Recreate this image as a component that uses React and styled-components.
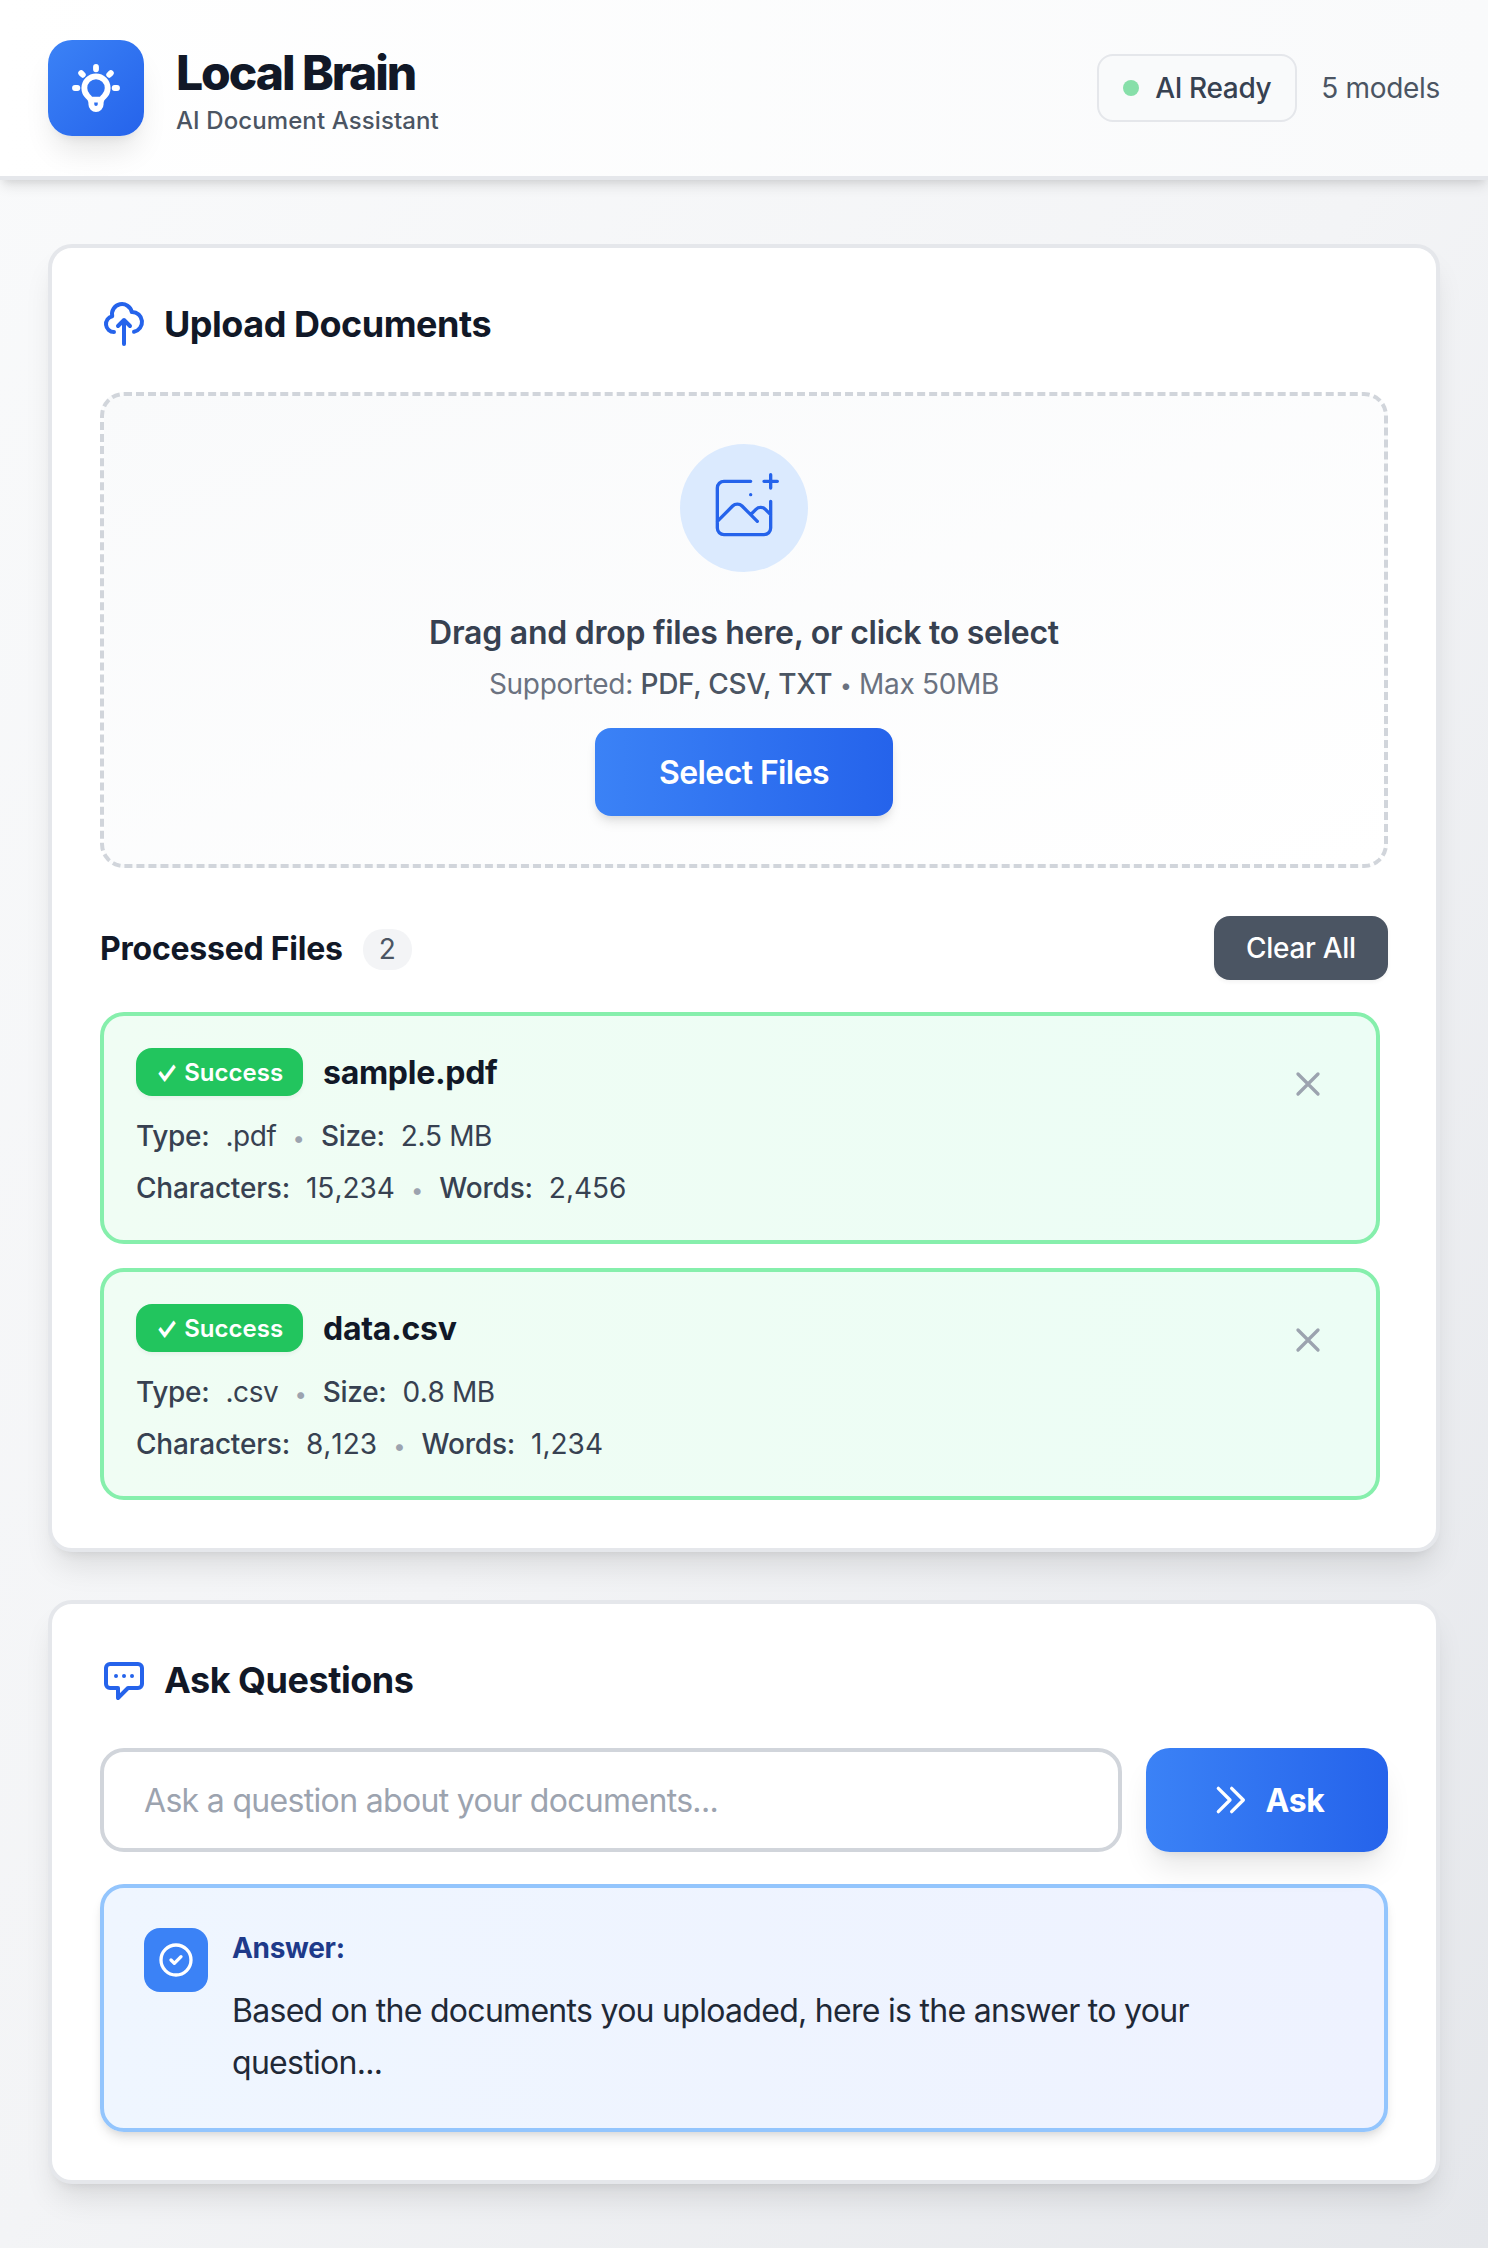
import React from "react";
import styled, { createGlobalStyle } from "styled-components";

const Global = createGlobalStyle`
  *, *::before, *::after { box-sizing: border-box; }
  body {
    margin: 0;
    font-family: Inter, "Liberation Sans", sans-serif;
    color: #111827;
    -webkit-font-smoothing: antialiased;
  }
  h1, h2, h3, p { margin: 0; }
  button, input { font-family: inherit; border: 0; }
`;

const Page = styled.div`
  min-height: 2248px;
  background: linear-gradient(to bottom right, #f9fafb, #f3f4f6, #e5e7eb);
`;

const Header = styled.header`
  display: flex;
  align-items: center;
  justify-content: space-between;
  height: 180px;
  padding: 0 48px;
  border-bottom: 4px solid #e5e7eb;
  background: linear-gradient(to right, #ffffff, #f9fafb);
  box-shadow: 0 8px 12px -2px rgba(0, 0, 0, 0.1), 0 4px 8px -4px rgba(0, 0, 0, 0.1);
`;

const Brand = styled.div`
  display: flex;
  align-items: center;
  gap: 32px;
`;

const BrandText = styled.div`
  padding-top: 2px;
`;

const Logo = styled.div`
  display: flex;
  align-items: center;
  justify-content: center;
  width: 96px;
  height: 96px;
  border-radius: 24px;
  color: #fff;
  background: linear-gradient(to bottom right, #3b82f6, #2563eb);
  box-shadow: 0 20px 30px -6px rgba(0, 0, 0, 0.1), 0 8px 12px -8px rgba(0, 0, 0, 0.1);
`;

const Title = styled.h1`
  font-size: 48px;
  line-height: 64px;
  font-weight: 800;
  letter-spacing: -2.05px;
`;

const Tagline = styled.p`
  font-size: 24px;
  line-height: 32px;
  font-weight: 500;
  color: #4b5563;
  letter-spacing: 0.1px;
`;

const StatusGroup = styled.div`
  display: flex;
  align-items: center;
  gap: 24px;
`;

const StatusPill = styled.div`
  display: flex;
  align-items: center;
  gap: 16px;
  width: 200px;
  height: 68px;
  padding: 0 24px;
  border: 2px solid #e5e7eb;
  border-radius: 16px;
  background: #f9fafb;
  font-size: 28px;
  font-weight: 500;
  color: #374151;
  letter-spacing: -0.35px;
  white-space: nowrap;
`;

const StatusDot = styled.span`
  flex: none;
  width: 16px;
  height: 16px;
  border-radius: 50%;
  background: #87dfa9;
`;

const ModelCount = styled.span`
  font-size: 28px;
  color: #4b5563;
  letter-spacing: -0.3px;
`;

const Main = styled.main`
  display: flex;
  flex-direction: column;
  gap: 48px;
  padding: 64px 48px;
`;

const Card = styled.section`
  padding: 48px;
  border: 4px solid #e5e7eb;
  border-radius: 24px;
  background: #fff;
  box-shadow: 0 20px 30px -6px rgba(0, 0, 0, 0.1), 0 8px 12px -8px rgba(0, 0, 0, 0.1);
`;

const CardHeading = styled.h2`
  display: flex;
  align-items: center;
  gap: 16px;
  height: 56px;
  margin-bottom: 40px;
  font-size: 36px;
  font-weight: 700;
  letter-spacing: -0.48px;

  svg { color: #2563eb; }
`;

const DropZone = styled.div`
  display: flex;
  flex-direction: column;
  align-items: center;
  padding: 48px;
  border: 4px dashed #d1d5db;
  border-radius: 24px;
  background: linear-gradient(to bottom right, #f9fafb, #ffffff);
`;

const DropIcon = styled.div`
  display: flex;
  align-items: center;
  justify-content: center;
  width: 128px;
  height: 128px;
  margin-bottom: 33px;
  border-radius: 50%;
  color: #2563eb;
  background: #dbeafe;
`;

const DropTitle = styled.p`
  font-size: 32px;
  line-height: 56px;
  font-weight: 600;
  color: #374151;
  letter-spacing: -0.26px;
`;

const DropHint = styled.p`
  margin: 3px 0 24px;
  font-size: 28px;
  line-height: 40px;
  color: #6b7280;
  letter-spacing: -0.3px;

  strong { font-weight: 500; color: #4b5563; }
`;

const HintBullet = styled.span`
  font-size: 21px;
  line-height: 1;
  vertical-align: 1px;
`;

const SelectButton = styled.button`
  width: 298px;
  height: 88px;
  border-radius: 16px;
  font-size: 32px;
  font-weight: 600;
  color: #fff;
  letter-spacing: -0.6px;
  background: linear-gradient(to right, #3b82f6, #2563eb);
  box-shadow: 0 8px 12px -2px rgba(0, 0, 0, 0.1), 0 4px 8px -4px rgba(0, 0, 0, 0.1);
`;

const ListHeader = styled.div`
  display: flex;
  align-items: center;
  justify-content: space-between;
  height: 64px;
  margin: 48px 0 32px;
`;

const ListTitle = styled.h3`
  display: flex;
  align-items: center;
  gap: 20px;
  font-size: 32px;
  font-weight: 700;
  letter-spacing: -0.24px;
`;

const Count = styled.span`
  margin-top: 3px;
  padding: 0 16px;
  border-radius: 20px;
  font-size: 28px;
  line-height: 41px;
  font-weight: 400;
  color: #4b5563;
  letter-spacing: 0;
  background: #f3f4f6;
`;

const ClearButton = styled.button`
  width: 174px;
  height: 64px;
  border-radius: 16px;
  font-size: 28px;
  font-weight: 500;
  color: #fff;
  letter-spacing: -0.3px;
  background: #4b5563;
  box-shadow: 0 2px 4px rgba(0, 0, 0, 0.05);
`;

const FileList = styled.div`
  display: flex;
  flex-direction: column;
  gap: 24px;
  padding-right: 8px;
`;

const FileCard = styled.article`
  display: flex;
  align-items: flex-start;
  justify-content: space-between;
  padding: 32px;
  border: 4px solid #86efac;
  border-radius: 24px;
  background: linear-gradient(to right, #f0fdf4, #ecfdf5);
`;

const FileInfo = styled.div`
  display: flex;
  flex-direction: column;
  gap: 12px;
`;

const FileTop = styled.div`
  display: flex;
  align-items: center;
  gap: 20px;
  height: 48px;
  margin-bottom: 8px;
`;

const SuccessBadge = styled.span`
  width: 167px;
  height: 48px;
  padding-left: 20px;
  border-radius: 16px;
  font-size: 24px;
  line-height: 50px;
  font-weight: 600;
  color: #fff;
  background: #22c55e;
  box-shadow: 0 2px 4px rgba(0, 0, 0, 0.05);
  white-space: nowrap;
`;

const CheckMark = styled.span`
  display: inline-block;
  margin-right: 1px;
  transform: scaleY(1.35);
`;

const FileName = styled.span`
  font-size: 32px;
  font-weight: 700;
  letter-spacing: -0.28px;
`;

const MetaLine = styled.div`
  display: flex;
  align-items: baseline;
  gap: 16px;
  height: 40px;
  font-size: 28px;
  line-height: 40px;
  color: #374151;
`;

const MetaLabel = styled.span`
  font-weight: 500;
  letter-spacing: ${(p) => (p.$tight ? "-0.3px" : "-0.2px")};
`;

const MetaValue = styled.span`
  font-kerning: none;
  letter-spacing: ${(p) => (p.$tight ? "-0.4px" : "0")};
`;

const Bullet = styled.span`
  font-size: 22px;
  line-height: 38px;
  color: #9ca3af;
`;

const RemoveButton = styled.button`
  display: flex;
  padding: 16px;
  color: #9ca3af;
  background: transparent;
`;

const AskRow = styled.div`
  display: flex;
  gap: 24px;
  height: 104px;
`;

const QuestionInput = styled.input`
  flex: 1;
  min-width: 0;
  padding: 0 40px;
  border: 4px solid #d1d5db;
  border-radius: 24px;
  outline: none;
  font-size: 32px;
  letter-spacing: -0.68px;
  color: #111827;
  background: #fff;

  &::placeholder { color: #9ca3af; opacity: 1; }
`;

const AskButton = styled.button`
  display: flex;
  align-items: center;
  justify-content: center;
  gap: 16px;
  width: 242px;
  border-radius: 24px;
  font-size: 32px;
  font-weight: 700;
  color: #fff;
  letter-spacing: -0.4px;
  background: linear-gradient(to right, #3b82f6, #2563eb);
  box-shadow: 0 20px 30px -6px rgba(0, 0, 0, 0.1), 0 8px 12px -8px rgba(0, 0, 0, 0.1);
`;

const Answer = styled.div`
  display: flex;
  align-items: flex-start;
  gap: 24px;
  margin-top: 32px;
  padding: 40px 40px 39px;
  border: 4px solid #93c5fd;
  border-radius: 24px;
  background: linear-gradient(to right, #eff6ff, #eef2ff);
  box-shadow: 0 8px 12px -2px rgba(0, 0, 0, 0.1), 0 4px 8px -4px rgba(0, 0, 0, 0.1);
`;

const AnswerIcon = styled.div`
  display: flex;
  flex: none;
  align-items: center;
  justify-content: center;
  width: 64px;
  height: 64px;
  border-radius: 16px;
  color: #fff;
  background: #3b82f6;
`;

const AnswerTitle = styled.h3`
  margin-bottom: 17px;
  font-size: 28px;
  line-height: 40px;
  font-weight: 700;
  color: #1e3a8a;
  letter-spacing: -0.3px;
`;

const AnswerText = styled.p`
  font-size: 32px;
  line-height: 52px;
  color: #1f2937;
  letter-spacing: -0.71px;
`;

function Icon({ d, size = 48, box = 24, stroke = 2 }) {
  return (
    <svg
      width={size}
      height={size}
      viewBox={`0 0 ${box} ${box}`}
      fill="none"
      stroke="currentColor"
      strokeWidth={stroke}
      strokeLinecap="round"
      strokeLinejoin="round"
    >
      <path d={d} />
    </svg>
  );
}

const icons = {
  bulb: "M9.663 17h4.673M12 3v1m6.364 1.636l-.707.707M21 12h-1M4 12H3m3.343-5.657l-.707-.707m2.828 9.9a5 5 0 117.072 0l-.548.547A3.374 3.374 0 0014 18.469V19a2 2 0 11-4 0v-.531c0-.895-.356-1.754-.988-2.386l-.548-.547z",
  cloud: "M7 16a4 4 0 01-.88-7.903A5 5 0 1115.9 6L16 6a5 5 0 011 9.9M15 13l-3-3m0 0l-3 3m3-3v12",
  image: "M28 8H12a4 4 0 00-4 4v20m32-12v8m0 0v8a4 4 0 01-4 4H12a4 4 0 01-4-4v-4m32-4l-3.172-3.172a4 4 0 00-5.656 0L28 28M8 32l9.172-9.172a4 4 0 015.656 0L28 28m0 0l4 4m4-24h8m-4-4v8m-12 4h.02",
  close: "M6 18L18 6M6 6l12 12",
  chat: "M8 10h.01M12 10h.01M16 10h.01M9 16H5a2 2 0 01-2-2V6a2 2 0 012-2h14a2 2 0 012 2v8a2 2 0 01-2 2h-5l-5 5v-5z",
  forward: "M13 5l7 7-7 7M5 5l7 7-7 7",
  check: "M9 12l2 2 4-4m6 2a9 9 0 11-18 0 9 9 0 0118 0z",
};

const files = [
  { name: "sample.pdf", type: ".pdf", size: "2.5 MB", chars: "15,234", words: "2,456" },
  { name: "data.csv", type: ".csv", size: "0.8 MB", chars: "8,123", words: "1,234" },
];

function Meta({ items, tight }) {
  return (
    <MetaLine>
      {items.map(([label, value], i) => (
        <React.Fragment key={label}>
          {i > 0 && <Bullet>•</Bullet>}
          <MetaLabel $tight={tight}>{label}:</MetaLabel>
          <MetaValue $tight={tight}>{value}</MetaValue>
        </React.Fragment>
      ))}
    </MetaLine>
  );
}

export default function App() {
  return (
    <Page>
      <Global />
      <Header>
        <Brand>
          <Logo><Icon d={icons.bulb} size={56} stroke={2.5} /></Logo>
          <BrandText>
            <Title>Local Brain</Title>
            <Tagline>AI Document Assistant</Tagline>
          </BrandText>
        </Brand>
        <StatusGroup>
          <StatusPill><StatusDot />AI Ready</StatusPill>
          <ModelCount>5 models</ModelCount>
        </StatusGroup>
      </Header>
      <Main>
        <Card>
          <CardHeading><Icon d={icons.cloud} />Upload Documents</CardHeading>
          <DropZone>
            <DropIcon><Icon d={icons.image} size={80} box={48} /></DropIcon>
            <DropTitle>Drag and drop files here, or click to select</DropTitle>
            <DropHint>Supported: <strong>PDF, CSV, TXT</strong> <HintBullet>•</HintBullet> Max 50MB</DropHint>
            <SelectButton>Select Files</SelectButton>
          </DropZone>
          <ListHeader>
            <ListTitle>Processed Files<Count>{files.length}</Count></ListTitle>
            <ClearButton>Clear All</ClearButton>
          </ListHeader>
          <FileList>
            {files.map((f) => (
              <FileCard key={f.name}>
                <FileInfo>
                  <FileTop>
                    <SuccessBadge><CheckMark>✓</CheckMark> Success</SuccessBadge>
                    <FileName>{f.name}</FileName>
                  </FileTop>
                  <Meta tight items={[["Type", f.type], ["Size", f.size]]} />
                  <Meta items={[["Characters", f.chars], ["Words", f.words]]} />
                </FileInfo>
                <RemoveButton aria-label="Remove file"><Icon d={icons.close} size={40} /></RemoveButton>
              </FileCard>
            ))}
          </FileList>
        </Card>
        <Card>
          <CardHeading><Icon d={icons.chat} />Ask Questions</CardHeading>
          <AskRow>
            <QuestionInput placeholder="Ask a question about your documents..." />
            <AskButton><Icon d={icons.forward} size={40} />Ask</AskButton>
          </AskRow>
          <Answer>
            <AnswerIcon><Icon d={icons.check} size={40} /></AnswerIcon>
            <div>
              <AnswerTitle>Answer:</AnswerTitle>
              <AnswerText>Based on the documents you uploaded, here is the answer to your question...</AnswerText>
            </div>
          </Answer>
        </Card>
      </Main>
    </Page>
  );
}
